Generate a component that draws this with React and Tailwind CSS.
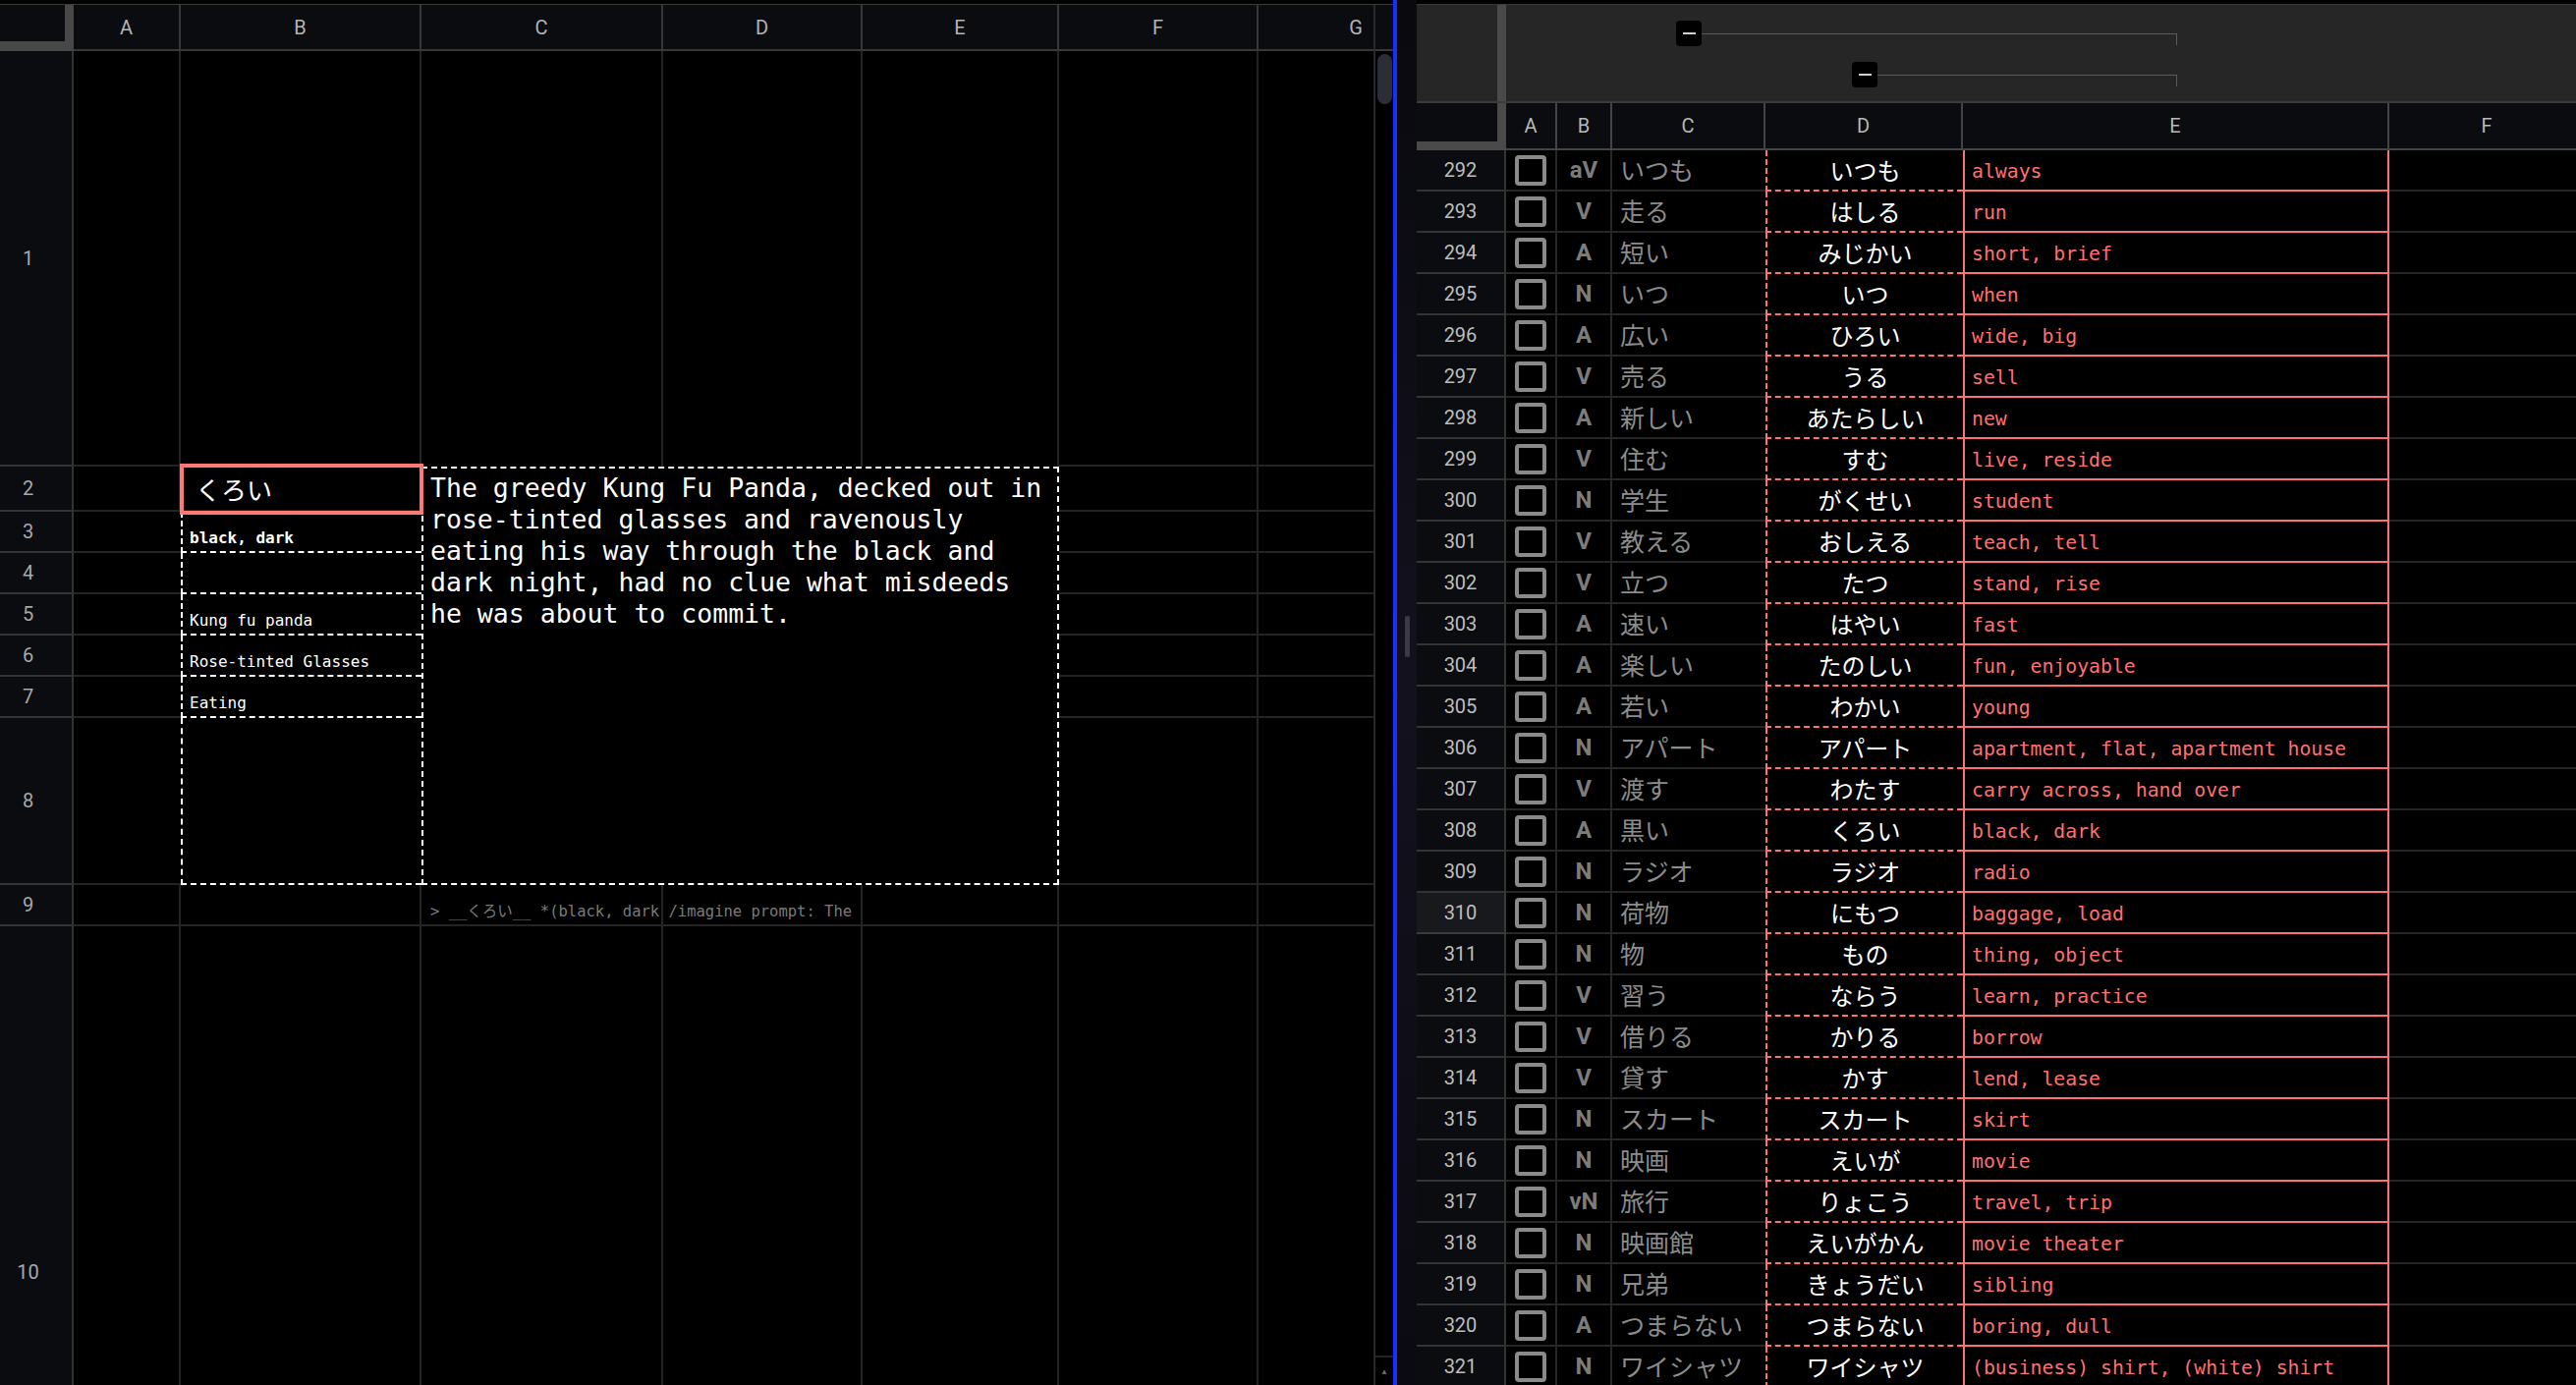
import React from "react";

const rows = [
  ["292", "aV", "いつも", "いつも", "always"],
  ["293", "V", "走る", "はしる", "run"],
  ["294", "A", "短い", "みじかい", "short, brief"],
  ["295", "N", "いつ", "いつ", "when"],
  ["296", "A", "広い", "ひろい", "wide, big"],
  ["297", "V", "売る", "うる", "sell"],
  ["298", "A", "新しい", "あたらしい", "new"],
  ["299", "V", "住む", "すむ", "live, reside"],
  ["300", "N", "学生", "がくせい", "student"],
  ["301", "V", "教える", "おしえる", "teach, tell"],
  ["302", "V", "立つ", "たつ", "stand, rise"],
  ["303", "A", "速い", "はやい", "fast"],
  ["304", "A", "楽しい", "たのしい", "fun, enjoyable"],
  ["305", "A", "若い", "わかい", "young"],
  ["306", "N", "アパート", "アパート", "apartment, flat, apartment house"],
  ["307", "V", "渡す", "わたす", "carry across, hand over"],
  ["308", "A", "黒い", "くろい", "black, dark"],
  ["309", "N", "ラジオ", "ラジオ", "radio"],
  ["310", "N", "荷物", "にもつ", "baggage, load"],
  ["311", "N", "物", "もの", "thing, object"],
  ["312", "V", "習う", "ならう", "learn, practice"],
  ["313", "V", "借りる", "かりる", "borrow"],
  ["314", "V", "貸す", "かす", "lend, lease"],
  ["315", "N", "スカート", "スカート", "skirt"],
  ["316", "N", "映画", "えいが", "movie"],
  ["317", "vN", "旅行", "りょこう", "travel, trip"],
  ["318", "N", "映画館", "えいがかん", "movie theater"],
  ["319", "N", "兄弟", "きょうだい", "sibling"],
  ["320", "A", "つまらない", "つまらない", "boring, dull"],
  ["321", "N", "ワイシャツ", "ワイシャツ", "(business) shirt, (white) shirt"],
];

const hdr =
  "bg-[#0b0c0f] border-r-2 border-b-2 border-[#383838] flex items-center justify-center text-[20px] text-[#b4b4b4] font-['Roboto',sans-serif]";
const rh =
  "bg-[#0b0c0f] border-r-2 border-b-2 border-[#333333] flex items-center justify-center pr-[16px] text-[20px] text-[#a8a8a8] font-['Roboto',sans-serif]";
const c = "border-r-2 border-b-2 border-[#242424]";
const cNoR = "border-b-2 border-[#242424]";
const cNoB = "border-r-2 border-[#242424]";
const bDash =
  "border-l-2 border-b-2 border-dashed border-white flex items-end pl-[7px] pb-[3px] text-[16px] leading-[20px] text-white font-['DejaVu_Sans_Mono',monospace] whitespace-nowrap";

function LeftGrid() {
  const dashedRows = [
    ["3", "black, dark", true],
    ["4", "", false],
    ["5", "Kung fu panda", false],
    ["6", "Rose-tinted Glasses", false],
    ["7", "Eating", false],
    ["8", "", false],
  ];
  return (
    <div className="grid grid-cols-[75px_109px_245px_246px_203px_200px_203px_200px] grid-rows-[47px_423px_46px_42px_42px_42px_42px_42px_170px_42px_706px] w-[1481px] shrink-0">
      {/* header */}
      <div className="bg-[#0b0c0f] border-r-[9px] border-b-[10px] border-[#484848]" />
      <div className={hdr}>A</div>
      <div className={hdr}>B</div>
      <div className={hdr}>C</div>
      <div className={hdr}>D</div>
      <div className={hdr}>E</div>
      <div className={hdr}>F</div>
      <div className={hdr}>G</div>

      {/* row 1 */}
      <div className={rh}>1</div>
      <div className={c} />
      <div className={c} />
      <div className={cNoB} />
      <div className={cNoB} />
      <div className={cNoB} />
      <div className={c} />
      <div className={c} />

      {/* row 2 */}
      <div className={rh}>2</div>
      <div className={c} />
      <div className="relative border-r-2 border-b-2 border-[#242424] flex items-center pl-[15px] text-[26px] text-white font-['Noto_Sans_CJK_JP',sans-serif]">
        くろい
        <div className="absolute -left-px -top-[3px] w-[248px] h-[52px] border-4 border-[#ff7878] z-10" />
      </div>
      <div className="col-span-3 row-span-7 border-2 border-dashed border-white pl-[7px] pt-[4px] text-[26.5px] leading-[32px] text-white font-['DejaVu_Sans_Mono',monospace] whitespace-nowrap">
        <div>The greedy Kung Fu Panda, decked out in</div>
        <div>rose-tinted glasses and ravenously</div>
        <div>eating his way through the black and</div>
        <div>dark night, had no clue what misdeeds</div>
        <div>he was about to commit.</div>
      </div>
      <div className={c} />
      <div className={c} />

      {dashedRows.map(([n, txt, bold]) => (
        <React.Fragment key={n}>
          <div className={rh}>{n}</div>
          <div className={cNoR} />
          <div className={bold ? bDash + " font-bold" : bDash}>{txt}</div>
          <div className={c} />
          <div className={c} />
        </React.Fragment>
      ))}

      {/* row 9 */}
      <div className={rh}>9</div>
      <div className={c} />
      <div className={c} />
      <div className="border-r-2 border-b-2 border-[#242424] flex items-end pl-[9px] pb-[3px]">
        <span className="block shrink-0 whitespace-nowrap text-[15.5px] leading-[20px] text-[#7a7a7a] font-['DejaVu_Sans_Mono','Noto_Sans_CJK_JP',monospace]">
          {"> __くろい__ *(black, dark /imagine prompt: The"}
        </span>
      </div>
      <div className={c} />
      <div className={c} />
      <div className={c} />
      <div className={c} />

      {/* row 10 */}
      <div className={rh}>10</div>
      <div className={c} />
      <div className={c} />
      <div className={c} />
      <div className={c} />
      <div className={c} />
      <div className={c} />
      <div className={c} />
    </div>
  );
}

function GroupArea() {
  return (
    <div className="h-[100px] flex bg-[#262626] border-b-2 border-[#3c3c3c] shrink-0">
      <div className="w-[91px] h-full border-r-[9px] border-[#4a4a4a] shrink-0" />
      <div className="flex-1 flex flex-col">
        <div className="h-[58px] flex items-center">
          <div className="w-[173px] shrink-0" />
          <div className="w-[26px] h-[26px] bg-black rounded-[4px] flex items-center justify-center shrink-0">
            <div className="w-[13px] h-[2px] bg-[#d0d0d0]" />
          </div>
          <div className="w-[483px] h-px bg-[#5a5a5a] shrink-0" />
          <div className="w-px h-[12px] bg-[#5a5a5a] translate-y-[6px] shrink-0" />
        </div>
        <div className="h-[26px] flex items-center">
          <div className="w-[352px] shrink-0" />
          <div className="w-[26px] h-[26px] bg-black rounded-[4px] flex items-center justify-center shrink-0">
            <div className="w-[13px] h-[2px] bg-[#d0d0d0]" />
          </div>
          <div className="w-[304px] h-px bg-[#5a5a5a] shrink-0" />
          <div className="w-px h-[12px] bg-[#5a5a5a] translate-y-[6px] shrink-0" />
        </div>
      </div>
    </div>
  );
}

const rhdr =
  "h-full bg-[#0b0c0f] border-r-2 border-b-2 border-[#444444] flex items-center justify-center text-[20px] text-[#b8b8b8] font-['Roboto',sans-serif] shrink-0";

function RightRow({ r }) {
  const [n, t, k, rd, e] = r;
  const hl = n === "310";
  return (
    <div className="h-[42px] flex shrink-0">
      <div
        className={
          hl
            ? "w-[91px] h-full bg-[#18191c] border-r-2 border-b-2 border-[#3a3a3a] flex items-center justify-center text-[20px] text-[#bdbdbd] font-['Roboto',sans-serif] shrink-0"
            : "w-[91px] h-full bg-[#0b0c0f] border-r-2 border-b-2 border-[#333333] flex items-center justify-center text-[20px] text-[#bdbdbd] font-['Roboto',sans-serif] shrink-0"
        }
      >
        {n}
      </div>
      <div className="w-[52px] h-full border-r-2 border-b-2 border-[#262626] flex items-center justify-center shrink-0">
        <div className="w-[32px] h-[31px] border-4 border-[#8a8a8a] rounded-[4px]" />
      </div>
      <div className="w-[56px] h-full border-r-2 border-b-2 border-[#262626] flex items-center justify-center text-[24px] font-bold text-[#7c7c7c] font-['Roboto',sans-serif] shrink-0">
        {t}
      </div>
      <div className="w-[156px] h-full border-b-2 border-[#262626] flex items-center pl-[8px] text-[25px] text-[#8c8c8c] font-['Noto_Sans_CJK_JP',sans-serif] whitespace-nowrap overflow-hidden shrink-0">
        {k}
      </div>
      <div className="w-[201px] h-full border-l-2 border-b-2 border-dashed border-[#ff7070] flex items-center justify-center text-[24px] text-white font-['Noto_Sans_CJK_JP',sans-serif] whitespace-nowrap shrink-0">
        {rd}
      </div>
      <div className="w-[434px] h-full border-l-2 border-r-2 border-b-2 border-[#ff7070] flex items-center pl-[7px] pt-[4px] text-[19.8px] text-[#ff7070] font-['DejaVu_Sans_Mono',monospace] whitespace-nowrap overflow-hidden shrink-0">
        {e}
      </div>
      <div className="w-[200px] h-full border-r-2 border-b-2 border-[#262626] shrink-0" />
    </div>
  );
}

export default function App() {
  return (
    <div className="w-[2622px] h-[1410px] bg-black flex overflow-hidden">
      {/* left pane */}
      <div className="w-[1418px] h-full flex flex-col pt-[4px] shrink-0">
        <div className="flex-1 flex border-t border-[#3a3a3a] overflow-hidden">
          <div className="w-[1398px] h-full overflow-hidden shrink-0">
            <LeftGrid />
          </div>
          <div className="w-[20px] h-full flex flex-col border-l-2 border-[#2a2a2a] shrink-0">
            <div className="h-[47px] bg-[#0b0c0f] border-b-2 border-[#383838] shrink-0" />
            <div className="flex-1 pl-[2px] pt-[3px]">
              <div className="w-[15px] h-[51px] rounded-full bg-[#2b2e35]" />
            </div>
            <div className="h-[30px] border-t-2 border-[#242424] flex items-center justify-center text-[8px] text-[#6a6a6a] shrink-0">
              ▲
            </div>
          </div>
        </div>
      </div>

      {/* blue divider */}
      <div className="w-[4px] h-full bg-[#1e2dff] shrink-0" />

      {/* dark strip */}
      <div className="w-[20px] h-full bg-gradient-to-b from-[#09090e] via-[#13111e] to-[#0b0a12] flex flex-col items-center pt-[627px] shrink-0">
        <div className="w-[5px] h-[42px] rounded-[2px] bg-[#3a3a46]" />
      </div>

      {/* right pane */}
      <div className="w-[1180px] h-full flex flex-col pt-[4px] overflow-hidden shrink-0">
        <div className="flex flex-col border-t border-[#3a3a3a]">
          <GroupArea />
          <div className="h-[48px] flex shrink-0">
            <div className="w-[91px] h-full bg-[#0b0c0f] border-r-[9px] border-b-[9px] border-[#4a4a4a] shrink-0" />
            <div className={rhdr + " w-[52px]"}>A</div>
            <div className={rhdr + " w-[56px]"}>B</div>
            <div className={rhdr + " w-[156px]"}>C</div>
            <div className={rhdr + " w-[201px]"}>D</div>
            <div className={rhdr + " w-[434px]"}>E</div>
            <div className={rhdr + " w-[200px]"}>F</div>
          </div>
          {rows.map((r) => (
            <RightRow key={r[0]} r={r} />
          ))}
        </div>
      </div>
    </div>
  );
}
